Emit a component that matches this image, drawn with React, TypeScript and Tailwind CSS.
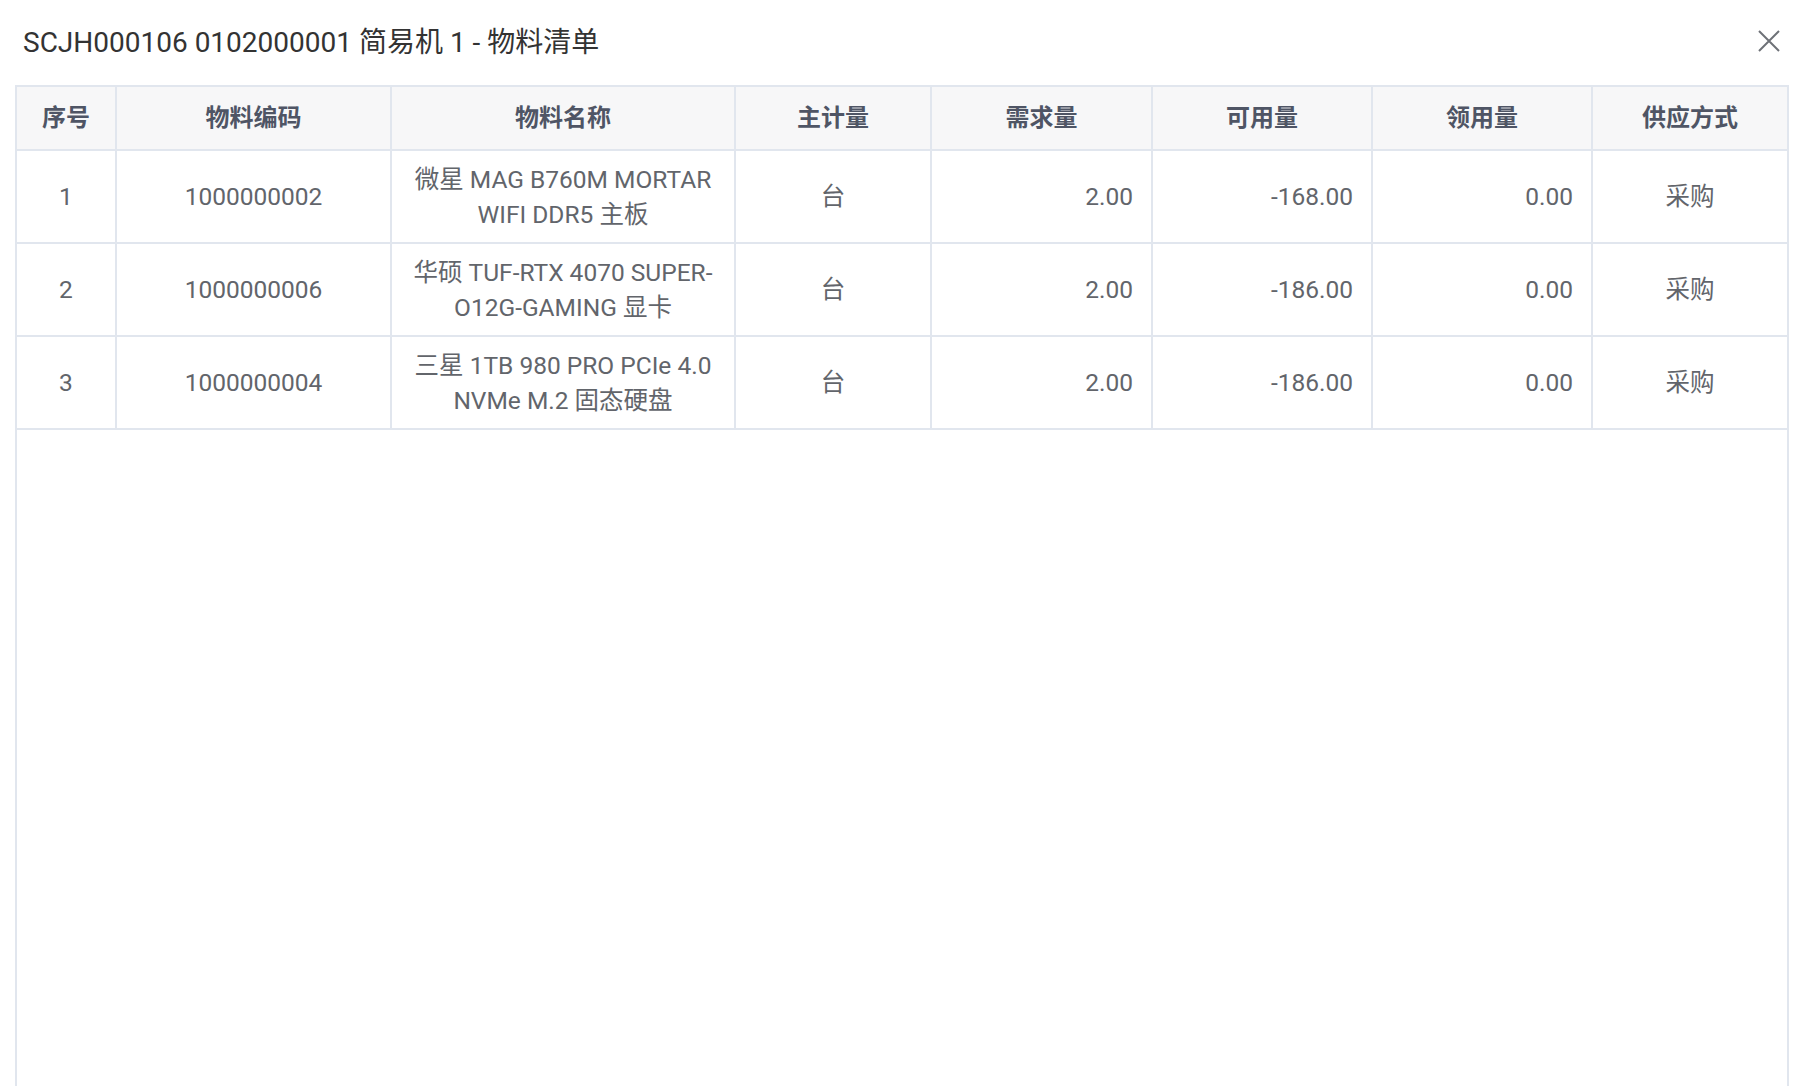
import * as React from 'react';

type Row = {
  no: number;
  code: string;
  name: string[];
  unit: string;
  demand: string;
  available: string;
  received: string;
  supply: string;
};

const rows: Row[] = [
  {
    no: 1,
    code: '1000000002',
    name: ['微星 MAG B760M MORTAR', 'WIFI DDR5 主板'],
    unit: '台',
    demand: '2.00',
    available: '-168.00',
    received: '0.00',
    supply: '采购',
  },
  {
    no: 2,
    code: '1000000006',
    name: ['华硕 TUF-RTX 4070 SUPER-', 'O12G-GAMING 显卡'],
    unit: '台',
    demand: '2.00',
    available: '-186.00',
    received: '0.00',
    supply: '采购',
  },
  {
    no: 3,
    code: '1000000004',
    name: ['三星 1TB 980 PRO PCIe 4.0', 'NVMe M.2 固态硬盘'],
    unit: '台',
    demand: '2.00',
    available: '-186.00',
    received: '0.00',
    supply: '采购',
  },
];

const headers = ['序号', '物料编码', '物料名称', '主计量', '需求量', '可用量', '领用量', '供应方式'];

// column template shared by header and body rows
const cols = 'grid grid-cols-[100px_275px_344px_196px_221px_220px_220px_194px]';

function Cell({
  children,
  align = 'center',
  last = false,
}: {
  children: React.ReactNode;
  align?: 'center' | 'right';
  last?: boolean;
}) {
  return (
    <div
      className={
        'flex items-center border-b-2 border-[#e1e6ee] px-[18px] ' +
        (align === 'right' ? 'justify-end text-right ' : 'justify-center text-center ') +
        (last ? '' : 'border-r-2')
      }
    >
      {children}
    </div>
  );
}

export default function App() {
  return (
    <div
      className="h-[1086px] flex flex-col overflow-hidden bg-white"
      style={{ fontFamily: 'Roboto, "Noto Sans CJK SC", sans-serif' }}
    >
      {/* Title bar */}
      <div className="flex items-start justify-between pl-[23px] pr-[24px] pt-[23px] pb-[22px]">
        <h1 className="text-[28px] leading-[40px] text-[#333333]">
          SCJH000106 0102000001 简易机 1 - 物料清单
        </h1>
        <button className="mt-[7px] p-0 text-[#6e7177]" aria-label="关闭">
          <svg width="22" height="22" viewBox="0 0 22 22" fill="none" stroke="currentColor" strokeWidth="2">
            <path d="M1 1L21 21M21 1L1 21" />
          </svg>
        </button>
      </div>

      {/* Table */}
      <div className="flex-1 mx-[15px] border-x-2 border-t-2 border-[#e1e6ee]">
        <div className={cols + ' h-[64px] bg-[#f7f7f8] text-[24px] font-bold text-[#4f5565]'}>
          {headers.map((h, i) => (
            <Cell key={h} last={i === headers.length - 1}>
              {h}
            </Cell>
          ))}
        </div>

        {rows.map((r) => (
          <div key={r.no} className={cols + ' h-[93px] text-[24.5px] leading-[35px] text-[#62656b]'}>
            <Cell>{r.no}</Cell>
            <Cell>{r.code}</Cell>
            <Cell>
              <div>
                {r.name.map((line) => (
                  <div key={line} className="whitespace-nowrap">
                    {line}
                  </div>
                ))}
              </div>
            </Cell>
            <Cell>{r.unit}</Cell>
            <Cell align="right">{r.demand}</Cell>
            <Cell align="right">{r.available}</Cell>
            <Cell align="right">{r.received}</Cell>
            <Cell last>{r.supply}</Cell>
          </div>
        ))}
      </div>
    </div>
  );
}
